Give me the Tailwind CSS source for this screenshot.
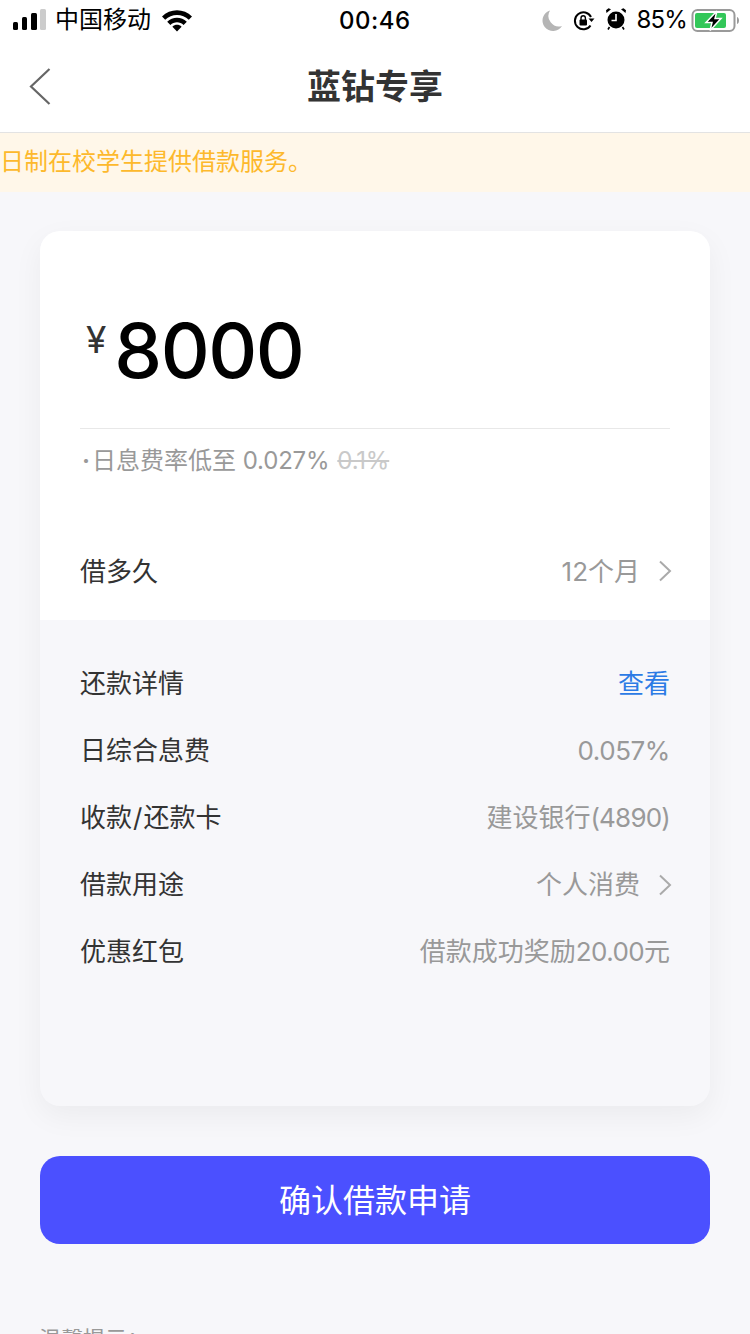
<!DOCTYPE html>
<html lang="zh-CN">
<head>
<meta charset="utf-8">
<script src="https://cdn.jsdelivr.net/npm/@tailwindcss/browser@4"></script>
</head>
<body class="m-0">
<div class="w-[750px] h-[1334px] overflow-hidden bg-[#f7f7fa] font-['Inter','Noto_Sans_CJK_SC',sans-serif]">
  <!-- status bar -->
  <div class="h-10 bg-white flex items-center justify-between text-black relative">
    <div class="flex items-center pl-[13px]">
      <svg width="34" height="24" viewBox="0 0 34 24" class="block">
        <rect x="0" y="14" width="5" height="8" rx="1.500" fill="#000"/>
        <rect x="9" y="9" width="5" height="13" rx="1.500" fill="#000"/>
        <rect x="18" y="5" width="6" height="17" rx="1.500" fill="#000"/>
        <rect x="27" y="1" width="6" height="21" rx="1.500" fill="#ccc"/>
      </svg>
      <span class="ml-[8px] text-[24px] leading-[42px]">中国移动</span>
      <svg width="30" height="24" viewBox="0 0 30 24" class="block ml-[11px]">
        <path d="M0 8.500C8 0 22 0 30 8.500L26.800 11.800C20.500 5.300 9.500 5.300 3.200 11.800Z" fill="#000"/>
        <path d="M5.200 13.700C10.500 8.300 19.500 8.300 24.800 13.700L21.600 17C18 13.300 12 13.300 8.400 17Z" fill="#000"/>
        <path d="M10.400 18.800C13 16.200 17 16.200 19.600 18.800L15 23.500Z" fill="#000"/>
      </svg>
    </div>
    <span class="absolute left-[339px] top-0 text-[24px] leading-[42px] font-medium tracking-[0.5px]">00:46</span>
    <div class="flex items-center pr-[5px]">
      <svg width="20" height="22" viewBox="0 0 20 22" class="block mt-[1px]">
        <path d="M8 0.500A10.500 10.500 0 1 0 20 16 A10.500 10.500 0 0 1 8 0.500Z" fill="#b5b5b5"/>
      </svg>
      <svg width="22" height="22" viewBox="0 0 22 22" class="block ml-[11px] mt-[1px]">
        <path d="M17.500 15.500A8.500 8.500 0 1 1 18 7" fill="none" stroke="#000" stroke-width="2"/>
        <path d="M15.500 8.500h6L18.500 12Z" fill="#000"/>
        <rect x="6.500" y="9.500" width="7.500" height="6" rx="1" fill="#000"/>
        <path d="M8 10V8a2.200 2.200 0 0 1 4.400 0v2" fill="none" stroke="#000" stroke-width="1.400"/>
      </svg>
      <svg width="22" height="24" viewBox="0 0 22 24" class="block ml-[10px] mt-[-3px]">
        <circle cx="11" cy="13" r="8.500" fill="#000"/>
        <path d="M1.500 6L6 2.200 3.500 1.200 1 3.200Z M20.500 6L16 2.200 18.500 1.200 21 3.200Z" fill="#000"/>
        <path d="M11 7v6.500H6.500" fill="none" stroke="#fff" stroke-width="1.600"/>
        <path d="M4.500 20L3 22.500M17.500 20L19 22.500" stroke="#000" stroke-width="1.600"/>
      </svg>
      <span class="ml-[9px] text-[24px] leading-[42px] tracking-[-0.8px]">85%</span>
      <svg width="54" height="26" viewBox="0 0 54 26" class="block ml-[4px] mt-[1px]">
        <rect x="1.500" y="2" width="42" height="21" rx="5" fill="none" stroke="#9a9a9a" stroke-width="2"/>
        <rect x="4" y="5" width="31" height="15" rx="2" fill="#33c759"/>
        <path d="M46 9v7c1.500-.5 2-2 2-3.500S47.500 9.500 46 9Z" fill="#9a9a9a"/>
        <path d="M26 3L15 14.500h6L19 22.500 30 10.500h-6Z" fill="#000" stroke="#fff" stroke-width="1.500"/>
      </svg>
    </div>
  </div>
  <!-- nav -->
  <div class="h-[92px] bg-white relative flex items-center justify-center">
    <svg width="24" height="40" viewBox="0 0 24 40" class="absolute left-[28px] top-[27px]">
      <path d="M21.500 2L3 19.500 21.500 37" fill="none" stroke="#666" stroke-width="2.200"/>
    </svg>
    <span class="text-[34px] leading-[92px] font-bold text-[#333] mt-[2px]">蓝钻专享</span>
  </div>
  <!-- notice -->
  <div class="h-[60px] bg-[#fff7e9] border-t border-[#e3e3e3] whitespace-nowrap overflow-hidden text-[24px] leading-[58px] text-[#fdb92c]">日制在校学生提供借款服务。</div>
  <!-- card -->
  <div class="mx-10 mt-[39px] h-[875px] rounded-[20px] overflow-hidden bg-[#f7f7fa] shadow-[0_10px_30px_rgba(0,0,0,0.05)]">
    <div class="h-[389px] bg-white px-10">
      <div class="h-[198px] border-b border-[#e8e8e8] flex items-start">
        <span class="mt-[89px] ml-[6px] text-[37px] leading-[40px] text-[#333]">¥</span>
        <span class="mt-[75px] ml-[8px] text-[76px] leading-[88px] font-medium text-black tracking-[-1.500px]">8000</span>
      </div>
      <div class="flex items-center mt-[14px] text-[24px] leading-[36px] text-[#999]">
        <span class="ml-[2px] mr-[2px] font-bold">·</span>
        <span>日息费率低至 <span class="tracking-[-0.2px]">0.027%</span></span>
        <span class="ml-[8px] line-through text-[#c9c9c9] tracking-[-0.2px]">0.1%</span>
      </div>
      <div class="flex items-center justify-between mt-[72px] h-10">
        <span class="text-[26px] text-[#333]">借多久</span>
        <div class="flex items-center">
          <span class="text-[26px] text-[#999]">12个月</span>
          <svg width="14" height="22" viewBox="0 0 14 22" class="block ml-[18px] mr-[-2px]"><path d="M2 1.500L12 11 2 20.500" fill="none" stroke="#aaa" stroke-width="2"/></svg>
        </div>
      </div>
    </div>
    <div class="px-10 pt-[30px] flex flex-col text-[26px]">
      <div class="h-[67px] flex items-center justify-between"><span class="text-[#333]">还款详情</span><span class="text-[#2c7be5]">查看</span></div>
      <div class="h-[67px] flex items-center justify-between"><span class="text-[#333]">日综合息费</span><span class="text-[#999] tracking-[-0.4px]">0.057%</span></div>
      <div class="h-[67px] flex items-center justify-between"><span class="text-[#333]">收款<span class="px-px">/</span>还款卡</span><span class="text-[#999]">建设银行<span class="tracking-[-0.8px]">(4890)</span></span></div>
      <div class="h-[67px] flex items-center justify-between"><span class="text-[#333]">借款用途</span>
        <div class="flex items-center">
          <span class="text-[#999]">个人消费</span>
          <svg width="14" height="22" viewBox="0 0 14 22" class="block ml-[18px] mr-[-2px]"><path d="M2 1.500L12 11 2 20.500" fill="none" stroke="#aaa" stroke-width="2"/></svg>
        </div>
      </div>
      <div class="h-[67px] flex items-center justify-between"><span class="text-[#333]">优惠红包</span><span class="text-[#999]">借款成功奖励<span class="tracking-[-0.6px]">20.00</span>元</span></div>
    </div>
  </div>
  <!-- button -->
  <div class="mx-10 mt-[50px] h-[88px] rounded-[20px] bg-[#4b50ff] flex items-center justify-center text-white text-[32px] pt-px">确认借款申请</div>
  <div class="ml-[39px] mt-[80px] text-[22px] leading-[30px] text-[#999]">温馨提示：</div>
</div>
</body>
</html>
